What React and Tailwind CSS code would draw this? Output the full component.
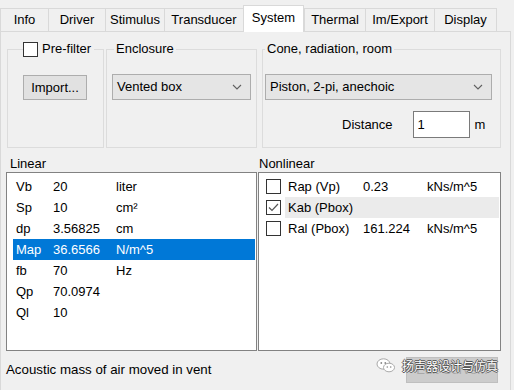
import React from "react";

const tabs = [
  { name: "Info", w: 49 },
  { name: "Driver", w: 58 },
  { name: "Stimulus", w: 60 },
  { name: "Transducer", w: 80 },
  { name: "System", w: 61, active: true },
  { name: "Thermal", w: 62 },
  { name: "Im/Export", w: 70 },
  { name: "Display", w: 63 },
];

const linear = [
  ["Vb", "20", "liter"],
  ["Sp", "10", "cm²"],
  ["dp", "3.56825", "cm"],
  ["Map", "36.6566", "N/m^5"],
  ["fb", "70", "Hz"],
  ["Qp", "70.0974", ""],
  ["Ql", "10", ""],
];

const nonlinear = [
  ["Rap (Vp)", "0.23", "kNs/m^5", false],
  ["Kab (Pbox)", "", "", true],
  ["Ral (Pbox)", "161.224", "kNs/m^5", false],
];

function Chevron() {
  return (
    <svg width="10" height="6" viewBox="0 0 10 6" className="shrink-0">
      <path d="M1 1 L5 5 L9 1" fill="none" stroke="#606060" strokeWidth="1.1" />
    </svg>
  );
}

function Checkbox({ checked }) {
  return (
    <div className="w-[15px] h-[15px] shrink-0 border border-[#333333] bg-white flex items-center justify-center">
      {checked && (
        <svg width="11" height="9" viewBox="0 0 11 9">
          <path d="M1 4.5 L4 7.5 L10 1" fill="none" stroke="#555" strokeWidth="1.2" />
        </svg>
      )}
    </div>
  );
}

// 下拉選單
function Select({ value, className }) {
  return (
    <div
      className={`h-[26px] bg-[#e5e5e5] border border-[#adadad] flex items-center justify-between pl-[4px] pr-[8px] ${className}`}
    >
      <span>{value}</span>
      <Chevron />
    </div>
  );
}

export default function App() {
  return (
    <div
      className="relative w-[514px] h-[390px] overflow-hidden bg-[#f0f0f0] text-[13px] leading-[16px] text-black pt-[5px]"
      style={{ fontFamily: '"Liberation Sans", Arial, sans-serif' }}
    >
      {/* 分頁標籤 */}
      <div className="flex items-end h-[26px]">
        {tabs.map((t) =>
          t.active ? (
            <div
              key={t.name}
              style={{ width: t.w }}
              className="relative z-10 h-[27px] -mb-px bg-white border border-b-0 border-[#d9d9d9] flex items-center justify-center pb-[3px]"
            >
              {t.name}
            </div>
          ) : (
            <div
              key={t.name}
              style={{ width: t.w }}
              className="h-[23px] bg-[#f0f0f0] border-t border-l border-r border-[#d9d9d9] -mr-px flex items-center justify-center"
            >
              {t.name}
            </div>
          )
        )}
      </div>

      {/* 分頁內容 */}
      <div className="w-[511px] h-[360px] border border-[#d9d9d9] bg-[#f0f0f0]">
        {/* 上方群組 */}
        <div className="flex mt-[9px] ml-[6px]">
          <fieldset className="w-[97px] h-[107px] border border-[#dcdcdc]">
            <legend className="ml-[15px] pr-[3px] flex items-center gap-[4px] h-[16px]">
              <Checkbox />
              <span>Pre-filter</span>
            </legend>
            <div className="ml-[15px] mt-[18px] w-[64px] h-[25px] bg-[#e1e1e1] border border-[#adadad] flex items-center justify-center">
              Import...
            </div>
          </fieldset>

          <fieldset className="ml-[2px] w-[151px] h-[107px] border border-[#dcdcdc]">
            <legend className="ml-[7px] px-[2px] h-[16px]">Enclosure</legend>
            <Select value="Vented box" className="ml-[5px] mt-[17px] w-[139px]" />
          </fieldset>

          <fieldset className="ml-[5px] w-[239px] h-[107px] border border-[#dcdcdc]">
            <legend className="ml-[2px] px-[2px] h-[16px]">Cone, radiation, room</legend>
            <Select value="Piston, 2-pi, anechoic" className="ml-[2px] mt-[17px] w-[227px]" />
            <div className="flex items-center mt-[11px] pl-[79px]">
              <span>Distance</span>
              <div className="ml-[20px] w-[57px] h-[27px] bg-white border border-[#7a7a7a] flex items-center pl-[4px]">
                1
              </div>
              <span className="ml-[5px]">m</span>
            </div>
          </fieldset>
        </div>

        {/* 下方清單 */}
        <div className="flex gap-[1px] mt-[8px] ml-[5px]">
          <div className="w-[251px]">
            <div className="pl-[4px] h-[16px]">Linear</div>
            <div className="h-[179px] bg-white border border-[#828282] pt-[3px] pl-[6px] pr-[1px]">
              {linear.map(([n, v, u]) => (
                <div
                  key={n}
                  className={`flex items-center h-[21px] pl-[3px] ${
                    n === "Map" ? "bg-[#0078d7] text-white" : ""
                  }`}
                >
                  <span className="w-[37px]">{n}</span>
                  <span className="w-[63px]">{v}</span>
                  <span>{u}</span>
                </div>
              ))}
            </div>
          </div>

          <div className="w-[243px]">
            <div className="pl-[1px] h-[16px]">Nonlinear</div>
            <div className="h-[179px] bg-white border border-[#828282] pt-[3px] pl-[7px] pr-[1px]">
              {nonlinear.map(([n, v, u, c]) => (
                <div key={n} className="flex items-center h-[21px]">
                  <Checkbox checked={c} />
                  <div
                    className={`flex items-center h-full flex-1 ml-[4px] pl-[3px] ${
                      c ? "bg-[#ebebeb]" : ""
                    }`}
                  >
                    <span className="w-[75px]">{n}</span>
                    <span className="w-[64px]">{v}</span>
                    <span>{u}</span>
                  </div>
                </div>
              ))}
            </div>
          </div>
        </div>

        {/* 狀態列 */}
        <div className="flex items-center justify-between mt-[6px] pl-[5px] pr-[12px] h-[26px]">
          <span className="text-[13.3px]">Acoustic mass of air moved in vent</span>
          <div className="w-[92px] h-[26px] bg-[#cccccc] border border-[#bfbfbf] text-[#a8a8a8] flex items-center justify-center">
            Edit Curve...
          </div>
        </div>
      </div>

      {/* 浮水印 */}
      <div className="absolute left-[376px] top-[358px] flex items-center gap-[6px] pointer-events-none">
        <svg width="20" height="15" viewBox="0 0 20 15">
          <ellipse cx="7.5" cy="6" rx="6.5" ry="5.2" fill="#fff" stroke="#a0a0a0" strokeWidth="0.9" />
          <ellipse cx="13" cy="9.5" rx="5.5" ry="4.3" fill="#fff" stroke="#a0a0a0" strokeWidth="0.9" />
          <circle cx="5.3" cy="5" r="0.9" fill="#888" />
          <circle cx="9.3" cy="5" r="0.9" fill="#888" />
          <circle cx="11.3" cy="9" r="0.8" fill="#888" />
          <circle cx="14.7" cy="9" r="0.8" fill="#888" />
        </svg>
        <span
          className="text-white text-[12px] leading-[15px] [text-shadow:1px_0_0_#555,-1px_0_0_#555,0_1px_0_#555,0_-1px_0_#555]"
          style={{ fontFamily: '"Noto Sans CJK SC", sans-serif' }}
        >
          扬声器设计与仿真
        </span>
      </div>
    </div>
  );
}
